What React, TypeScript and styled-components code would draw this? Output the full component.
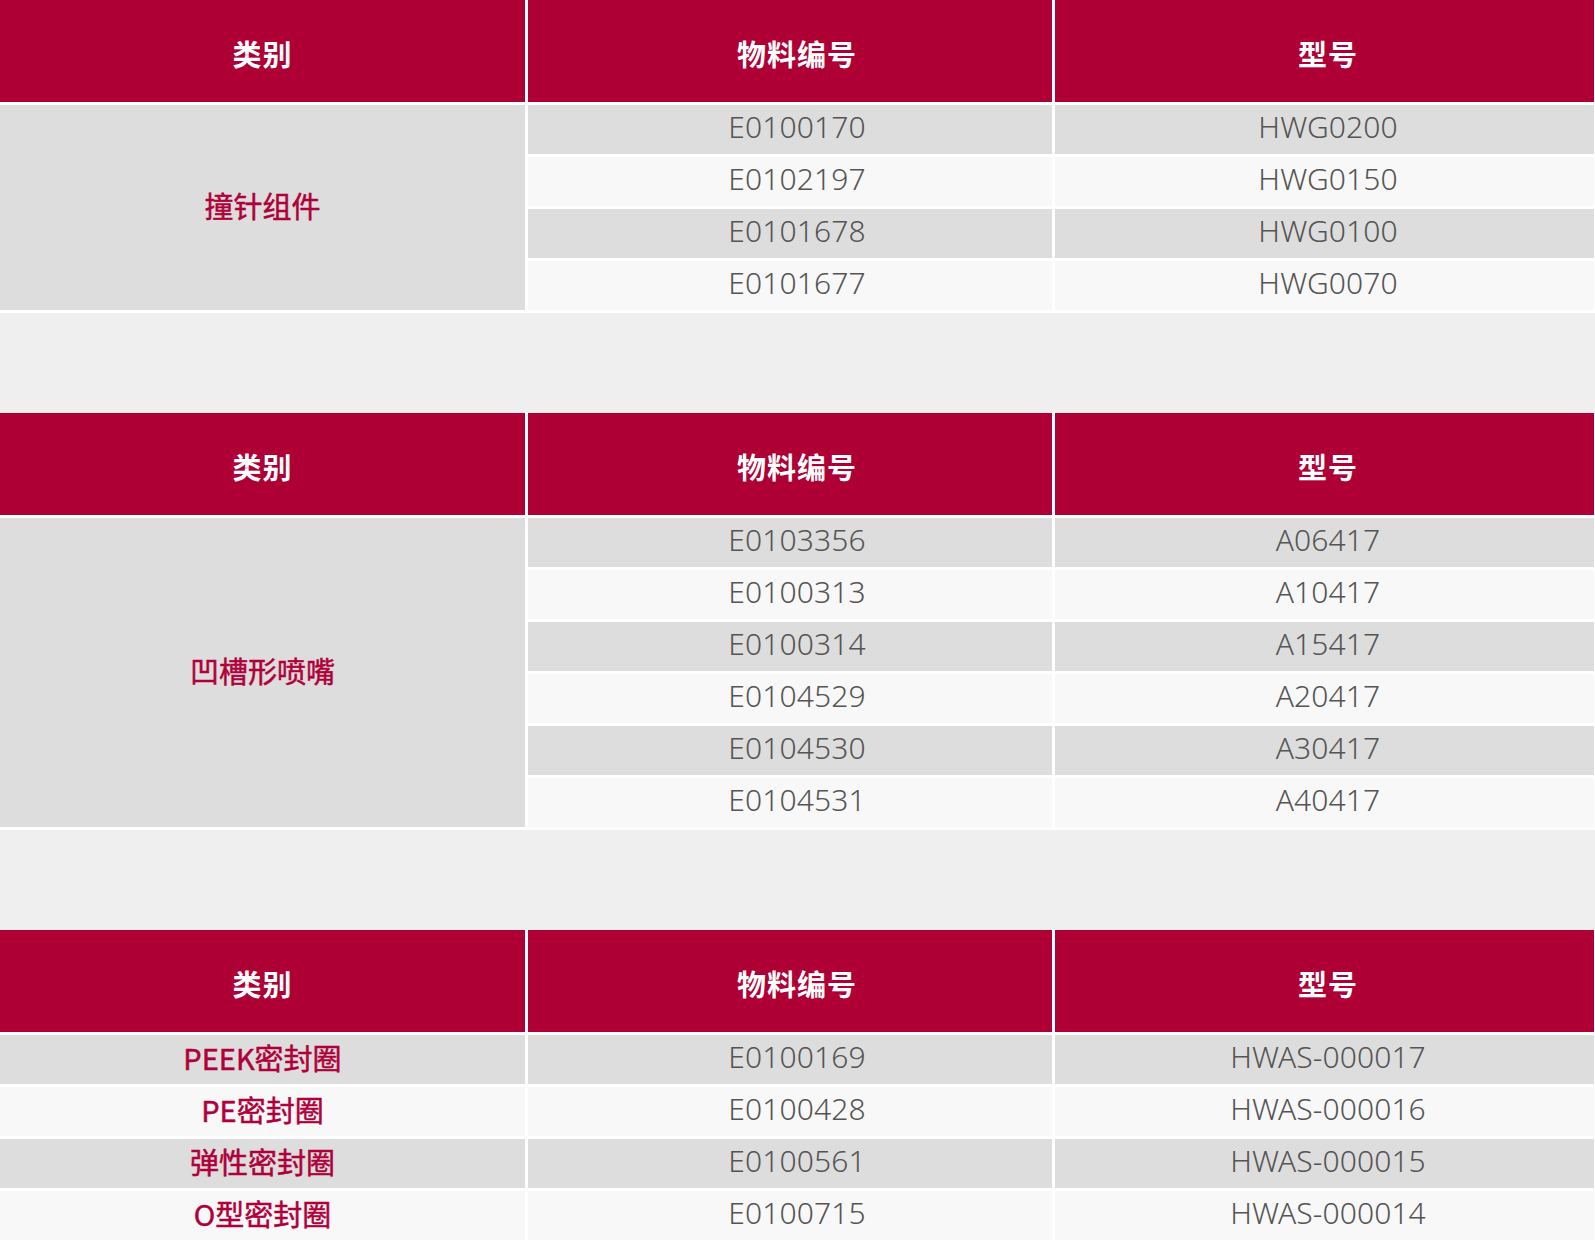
import React from "react";
import styled, { createGlobalStyle } from "styled-components";

const GlobalStyle = createGlobalStyle`
  html, body {
    margin: 0;
    padding: 0;
    background: #efefef;
  }
  body {
    font-family: "Noto Sans CJK SC", "Noto Sans", sans-serif;
  }
`;

const Page = styled.div`
  display: flex;
  flex-direction: column;
  gap: 100px;
  width: 1595px;
`;

const Table = styled.div`
  display: grid;
  grid-template-columns: 525px 524px 539px;
  grid-template-rows: 102px;
  grid-auto-rows: 49px;
  gap: 3px;
  background: #ffffff;
  padding: 0 1px 3px 0;
`;

const colPad = [0, 14, 7];

const HeadCell = styled.div<{ $col: number }>`
  grid-row: 1;
  display: flex;
  align-items: center;
  justify-content: center;
  box-sizing: border-box;
  padding-top: 4px;
  padding-left: ${(p) => colPad[p.$col]}px;
  background: #ae0034;
  color: #ffffff;
  font-size: 29px;
  font-weight: 700;
  letter-spacing: 1px;
`;

const Category = styled.div<{ $span: number; $alt: boolean }>`
  grid-column: 1;
  grid-row: span ${(p) => p.$span};
  display: flex;
  align-items: center;
  justify-content: center;
  box-sizing: border-box;
  padding-bottom: 6px;
  background: ${(p) => (p.$alt ? "#f8f8f8" : "#dddddd")};
  color: #b0003a;
  font-size: 29px;
  font-weight: 400;
  -webkit-text-stroke: 0.5px #b0003a;
`;

const ValueCell = styled.div<{ $col: number; $alt: boolean }>`
  display: flex;
  align-items: center;
  justify-content: center;
  box-sizing: border-box;
  padding-bottom: 7px;
  padding-left: ${(p) => colPad[p.$col]}px;
  background: ${(p) => (p.$alt ? "#f8f8f8" : "#dddddd")};
  color: #555555;
  font-family: "Noto Sans", "Noto Sans CJK SC", sans-serif;
  font-size: 30px;
  font-weight: 300;
  letter-spacing: 0.1px;
`;

type Group = { category: string; rows: [string, string][] };
type Section = { groups: Group[] };

const sections: Section[] = [
  {
    groups: [
      {
        category: "撞针组件",
        rows: [
          ["E0100170", "HWG0200"],
          ["E0102197", "HWG0150"],
          ["E0101678", "HWG0100"],
          ["E0101677", "HWG0070"],
        ],
      },
    ],
  },
  {
    groups: [
      {
        category: "凹槽形喷嘴",
        rows: [
          ["E0103356", "A06417"],
          ["E0100313", "A10417"],
          ["E0100314", "A15417"],
          ["E0104529", "A20417"],
          ["E0104530", "A30417"],
          ["E0104531", "A40417"],
        ],
      },
    ],
  },
  {
    groups: [
      { category: "PEEK密封圈", rows: [["E0100169", "HWAS-000017"]] },
      { category: "PE密封圈", rows: [["E0100428", "HWAS-000016"]] },
      { category: "弹性密封圈", rows: [["E0100561", "HWAS-000015"]] },
      { category: "O型密封圈", rows: [["E0100715", "HWAS-000014"]] },
    ],
  },
];

const headers = ["类别", "物料编号", "型号"];

function SectionTable({ section }: { section: Section }) {
  let rowIndex = 0;
  return (
    <Table>
      {headers.map((h, i) => (
        <HeadCell key={h} $col={i}>
          {h}
        </HeadCell>
      ))}
      {section.groups.map((g) => {
        const start = rowIndex;
        const items = g.rows.map(([code, model], i) => {
          const alt = (start + i) % 2 === 1;
          return (
            <React.Fragment key={code}>
              {i === 0 && (
                <Category $span={g.rows.length} $alt={g.rows.length > 1 ? false : alt}>
                  {g.category}
                </Category>
              )}
              <ValueCell $col={1} $alt={alt}>
                {code}
              </ValueCell>
              <ValueCell $col={2} $alt={alt}>
                {model}
              </ValueCell>
            </React.Fragment>
          );
        });
        rowIndex += g.rows.length;
        return <React.Fragment key={g.category}>{items}</React.Fragment>;
      })}
    </Table>
  );
}

export default function App() {
  return (
    <>
      <GlobalStyle />
      <Page>
        {sections.map((s, i) => (
          <SectionTable key={i} section={s} />
        ))}
      </Page>
    </>
  );
}
